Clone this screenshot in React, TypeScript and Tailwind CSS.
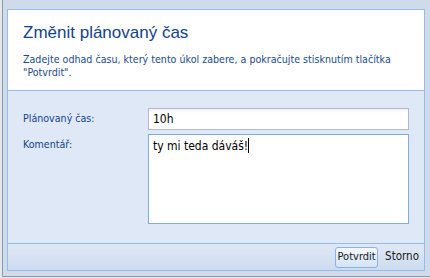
export default function App() {
  return (
    <div className="w-[430px] h-[278px] bg-[#e4e8ee] overflow-hidden font-['DejaVu_Sans_Condensed','Liberation_Sans',sans-serif]">
      {/* window frame */}
      <div className="ml-[2px] w-[430px] h-[277px] border-l border-b border-[#8f9aa9] bg-[#cfdbeb] pt-[9px] pl-[4px]">
        <div className="w-[418px] h-[262px] border border-[#99bbe8] flex flex-col">
          {/* header */}
          <div className="h-[81px] bg-white border-b border-[#99bbe8] pl-[15px] pt-[12px]">
            <h1 className="text-[17px] leading-[22px] text-[#15428b] font-['Liberation_Sans',sans-serif]">Změnit plánovaný čas</h1>
            <p className="mt-[9px] text-[10.6px] leading-[13px] text-[#1c4a8e]">
              Zadejte odhad času, který tento úkol zabere, a pokračujte stisknutím tlačítka
              <br />"Potvrdit".
            </p>
          </div>

          {/* body */}
          <div className="h-[153px] bg-[#dfe8f6] border-b border-[#99bbe8] pl-[15px] pt-[17px]">
            <div className="flex items-center">
              <label className="w-[125px] text-[10.6px] text-[#15428b]">Plánovaný čas:</label>
              <div className="w-[261px] h-[22px] border border-[#b5b8c8] bg-white bg-gradient-to-b from-[#f2f2f2] to-white to-[4px] pl-[4px] flex items-center text-[12px] text-black">
                10h
              </div>
            </div>
            <div className="flex mt-[4px]">
              <label className="w-[125px] text-[10.6px] text-[#15428b] pt-[3px]">Komentář:</label>
              <div className="w-[261px] h-[90px] border border-[#7eadd9] bg-white pl-[4px] pt-[2px] text-[12px] text-black flex items-start">
                <span>ty mi teda dáváš!</span>
                <span className="w-[1px] h-[15px] bg-black mt-[1px]" />
              </div>
            </div>
          </div>

          {/* footer */}
          <div className="flex-1 bg-gradient-to-b from-[#dfe8f6] to-[#cedcf0] flex items-center justify-end pr-[5px] gap-[7px]">
            <button className="h-[21px] w-[43px] rounded-[3px] border border-[#8fb3e0] bg-gradient-to-b from-[#f3f8fe] to-[#d3e3f7] text-[11px] text-[#1a1a1a]">
              Potvrdit
            </button>
            <span className="text-[11.5px] text-[#1a1a1a]">Storno</span>
          </div>
        </div>
      </div>
    </div>
  );
}
